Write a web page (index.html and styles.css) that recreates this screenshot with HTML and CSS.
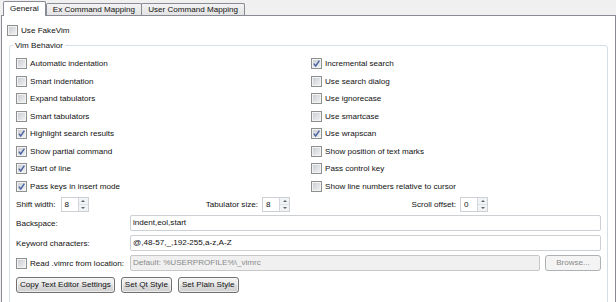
FILE: index.html
```html
<!DOCTYPE html>
<html lang="en">
<head>
<meta charset="UTF-8" />
<title>FakeVim - General</title>
<link rel="stylesheet" href="styles.css">
</head>
<body>
  <div class="tabbar">
    <div class="tab active">General</div>
    <div class="tab">Ex Command Mapping</div>
    <div class="tab">User Command Mapping</div>
  </div>

  <div class="pane">
    <label class="check top-check"><span class="cb"></span>Use FakeVim</label>

    <fieldset class="group">
      <legend>Vim Behavior</legend>

      <div class="options">
        <label class="check"><span class="cb"></span>Automatic indentation</label>
        <label class="check"><span class="cb"><svg viewBox="0 0 9 9"><path d="M1.8 4.6 L3.7 7 L7.4 1.6" /></svg></span>Incremental search</label>
        <label class="check"><span class="cb"></span>Smart indentation</label>
        <label class="check"><span class="cb"></span>Use search dialog</label>
        <label class="check"><span class="cb"></span>Expand tabulators</label>
        <label class="check"><span class="cb"></span>Use ignorecase</label>
        <label class="check"><span class="cb"></span>Smart tabulators</label>
        <label class="check"><span class="cb"></span>Use smartcase</label>
        <label class="check"><span class="cb"><svg viewBox="0 0 9 9"><path d="M1.8 4.6 L3.7 7 L7.4 1.6" /></svg></span>Highlight search results</label>
        <label class="check"><span class="cb"><svg viewBox="0 0 9 9"><path d="M1.8 4.6 L3.7 7 L7.4 1.6" /></svg></span>Use wrapscan</label>
        <label class="check"><span class="cb"><svg viewBox="0 0 9 9"><path d="M1.8 4.6 L3.7 7 L7.4 1.6" /></svg></span>Show partial command</label>
        <label class="check"><span class="cb"></span>Show position of text marks</label>
        <label class="check"><span class="cb"><svg viewBox="0 0 9 9"><path d="M1.8 4.6 L3.7 7 L7.4 1.6" /></svg></span>Start of line</label>
        <label class="check"><span class="cb"></span>Pass control key</label>
        <label class="check"><span class="cb"><svg viewBox="0 0 9 9"><path d="M1.8 4.6 L3.7 7 L7.4 1.6" /></svg></span>Pass keys in insert mode</label>
        <label class="check"><span class="cb"></span>Show line numbers relative to cursor</label>
      </div>

      <div class="spin-row">
        <div class="spin-group">
          <span>Shift width:</span>
          <div class="spin"><span class="spin-val">8</span><span class="spin-btns"><span class="up"></span><span class="down"></span></span></div>
        </div>
        <div class="spin-group end">
          <span>Tabulator size:</span>
          <div class="spin"><span class="spin-val">8</span><span class="spin-btns"><span class="up"></span><span class="down"></span></span></div>
        </div>
        <div class="spin-group end">
          <span>Scroll offset:</span>
          <div class="spin"><span class="spin-val">0</span><span class="spin-btns"><span class="up"></span><span class="down"></span></span></div>
        </div>
      </div>

      <div class="form">
        <span>Backspace:</span>
        <div class="field">indent,eol,start</div>

        <span>Keyword characters:</span>
        <div class="field">@,48-57,_,192-255,a-z,A-Z</div>

        <label class="check"><span class="cb"></span>Read .vimrc from location:</label>
        <div class="browse-cell">
          <div class="field disabled">Default: %USERPROFILE%\_vimrc</div>
          <button class="btn browse" disabled>Browse...</button>
        </div>
      </div>

      <div class="buttons">
        <button class="btn">Copy Text Editor Settings</button>
        <button class="btn">Set Qt Style</button>
        <button class="btn">Set Plain Style</button>
      </div>
    </fieldset>
  </div>
</body>
</html>
```

FILE: styles.css
```css
body {
  margin: 0;
  width: 616px;
  height: 302px;
  overflow: hidden;
  background: #f0f0f0;
  font-family: "Liberation Sans", Arial, sans-serif;
  font-size: 8.1px;
  color: #111;
}

/* Tabs */
.tabbar {
  display: flex;
  align-items: flex-end;
  height: 15px;
  padding-left: 3px;
  position: relative;
  z-index: 1;
}

.tab {
  height: 11px;
  line-height: 11px;
  padding: 0 6px;
  border: 1px solid #898c95;
  border-bottom: 0;
  border-radius: 2px 2px 0 0;
  background: linear-gradient(#f3f3f3, #e3e3e3);
  margin-right: -1px;
  white-space: nowrap;
}

.tab.active {
  height: 14px;
  line-height: 14px;
  background: #fff;
  margin-bottom: -1px;
  margin-right: 0;
}

/* Page */
.pane {
  margin-left: 1px;
  width: 615px;
  height: 287px;
  overflow: hidden;
  box-sizing: border-box;
  border: 1px solid #898c95;
  border-bottom: 0;
  background: #fff;
  padding: 7px 0 0 5px;
}

.check {
  display: flex;
  align-items: center;
  height: 14px;
  white-space: nowrap;
}

.cb {
  width: 11px;
  height: 11px;
  box-sizing: border-box;
  flex: none;
  border: 1px solid #8e8f8f;
  background: linear-gradient(135deg, #c6cad0, #f4f4f4);
  box-shadow: inset 0 0 0 1px #f3f3f3;
  margin-right: 3px;
}

.cb svg {
  display: block;
  width: 9px;
  height: 9px;
}

.cb path {
  fill: none;
  stroke: #4a62a0;
  stroke-width: 1.4;
}

/* Group box */
.group {
  margin: 3px 7px 0 2px;
  border: 1px solid #d5dfe5;
  border-radius: 3px;
  padding: 4px 6px 40px 6px;
  min-width: 0;
}

.group legend {
  padding: 0 2px;
  margin-left: -3px;
  line-height: 11px;
}

.options {
  display: grid;
  grid-template-columns: 295px 1fr;
  grid-auto-rows: 17.5px;
  align-items: center;
}

/* Spin boxes */
.spin-row {
  display: grid;
  grid-template-columns: 74px 200px 198px;
  height: 16px;
  margin-top: 1px;
  align-items: center;
}

.spin-group {
  display: flex;
  align-items: center;
  gap: 5px;
  white-space: nowrap;
}

.spin-group.end {
  justify-content: flex-end;
  gap: 4px;
}

.spin {
  width: 28px;
  height: 15px;
  box-sizing: border-box;
  border: 1px solid #cdd1d6;
  display: flex;
}

.spin-val {
  flex: 1;
  padding-left: 3px;
  line-height: 13px;
}

.spin-btns {
  width: 9px;
  display: flex;
  flex-direction: column;
  border-left: 1px solid #d4d8de;
}

.spin-btns span {
  flex: 1;
  display: flex;
  align-items: center;
  justify-content: center;
  background: #f1f3f5;
}

.spin-btns .up {
  border-bottom: 1px solid #dde1e5;
}

.spin-btns .up::after {
  content: "";
  border-left: 2px solid transparent;
  border-right: 2px solid transparent;
  border-bottom: 2px solid #5f646b;
}

.spin-btns .down::after {
  content: "";
  border-left: 2px solid transparent;
  border-right: 2px solid transparent;
  border-top: 2px solid #5f646b;
}

/* Line edits */
.form {
  display: grid;
  grid-template-columns: 114px 1fr;
  grid-auto-rows: 16px;
  row-gap: 4px;
  margin-top: 3px;
  align-items: center;
}

.field {
  height: 16px;
  box-sizing: border-box;
  border: 1px solid #ccd0d5;
  border-radius: 2px;
  padding-left: 2px;
  line-height: 14px;
  white-space: nowrap;
}

.field.disabled {
  background: #f0f0f0;
  border-color: #c8c8c8;
  color: #8a8a8a;
}

.browse-cell {
  display: flex;
  gap: 5px;
}

.browse-cell .field {
  flex: 1;
}

/* Buttons */
.buttons {
  display: flex;
  gap: 6px;
  margin-top: 6px;
}

.btn {
  height: 16px;
  box-sizing: border-box;
  padding: 0 3px;
  font: inherit;
  color: #111;
  line-height: 14px;
  border: 1px solid #707070;
  border-radius: 3px;
  background: linear-gradient(#f2f2f2 0%, #ebebeb 45%, #dddddd 50%, #cfcfcf 100%);
  box-shadow: inset 0 0 0 1px rgb(255 255 255 / 0.6);
  white-space: nowrap;
}

.btn.browse {
  width: 56px;
  color: #8a8a8a;
  border-color: #adb2b5;
  background: #f4f4f4;
  box-shadow: none;
}
```
